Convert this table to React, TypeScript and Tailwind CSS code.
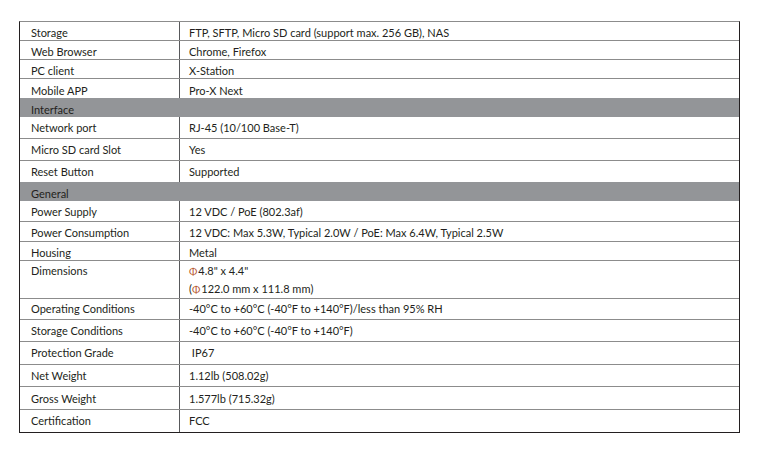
import React from "react";

type Row =
  | { kind: "section"; label: string }
  | { kind: "row"; label: string; value: React.ReactNode; cls: string };

const Phi = () => <span className="text-[#b4532a] text-[10px] mr-[1px]">Φ</span>;

const rows: Row[] = [
  { kind: "row", label: "Storage", value: "FTP, SFTP, Micro SD card (support max. 256 GB), NAS", cls: "h-[18px] pt-[5px]" },
  { kind: "row", label: "Web Browser", value: "Chrome, Firefox", cls: "h-[18px] pt-[5px]" },
  { kind: "row", label: "PC client", value: "X-Station", cls: "h-[18px] pt-[5px]" },
  { kind: "row", label: "Mobile APP", value: "Pro-X Next", cls: "h-[19px] pt-[6px]" },
  { kind: "section", label: "Interface" },
  { kind: "row", label: "Network port", value: "RJ-45 (10/100 Base-T)", cls: "h-[21px] pt-[5px]" },
  { kind: "row", label: "Micro SD card Slot", value: "Yes", cls: "h-[21px] pt-[5px]" },
  { kind: "row", label: "Reset Button", value: "Supported", cls: "h-[21px] pt-[5px]" },
  { kind: "section", label: "General" },
  { kind: "row", label: "Power Supply", value: "12 VDC / PoE (802.3af)", cls: "h-[20px] pt-[5px]" },
  { kind: "row", label: "Power Consumption", value: "12 VDC: Max 5.3W, Typical 2.0W / PoE: Max 6.4W, Typical 2.5W", cls: "h-[19px] pt-[5px]" },
  { kind: "row", label: "Housing", value: "Metal", cls: "h-[18px] pt-[5px]" },
  {
    kind: "row",
    label: "Dimensions",
    value: (
      <div className="flex flex-col gap-[6px]">
        <span>
          <Phi />4.8" x 4.4"
        </span>
        <span>
          (<Phi />122.0 mm x 111.8 mm)
        </span>
      </div>
    ),
    cls: "h-[37px] pt-[4px]",
  },
  { kind: "row", label: "Operating Conditions", value: "-40°C to +60°C (-40°F to +140°F)/less than 95% RH", cls: "h-[20px] pt-[4px]" },
  { kind: "row", label: "Storage Conditions", value: "-40°C to +60°C (-40°F to +140°F)", cls: "h-[21px] pt-[5px]" },
  { kind: "row", label: "Protection Grade", value: "\u00a0IP67", cls: "h-[22px] pt-[5px]" },
  { kind: "row", label: "Net Weight", value: "1.12lb (508.02g)", cls: "h-[21px] pt-[5px]" },
  { kind: "row", label: "Gross Weight", value: "1.577lb (715.32g)", cls: "h-[22px] pt-[6px]" },
  { kind: "row", label: "Certification", value: "FCC", cls: "h-[22px] pt-[5px]" },
];

export default function App() {
  return (
    <div className="w-[764px] h-[449px] bg-white font-['Lato','Noto_Sans',sans-serif]">
      <div className="pt-[21px] pl-[19px]">
        <div className="w-[721px] border-t border-t-[#8c8c8c] border-l border-r border-b border-l-[#231f20] border-r-[#231f20] border-b-[#231f20] text-[11px] leading-[12px] text-[#231f20]">
          {rows.map((r, i) => {
            if (r.kind === "section") {
              return (
                <div key={i} className="h-[19px] bg-[#939598] pl-[11px] pt-[6px]">
                  {r.label}
                </div>
              );
            }
            const next = rows[i + 1];
            const lineBelow = next !== undefined && next.kind === "row";
            return (
              <div
                key={i}
                className={
                  lineBelow
                    ? "flex border-b border-b-[#8c8c8c]"
                    : "flex"
                }
              >
                <div className={"w-[160px] shrink-0 border-r border-r-[#58595b] pl-[11px] " + r.cls}>
                  {r.label}
                </div>
                <div className={"flex-1 pl-[9px] " + r.cls}>{r.value}</div>
              </div>
            );
          })}
        </div>
      </div>
    </div>
  );
}
